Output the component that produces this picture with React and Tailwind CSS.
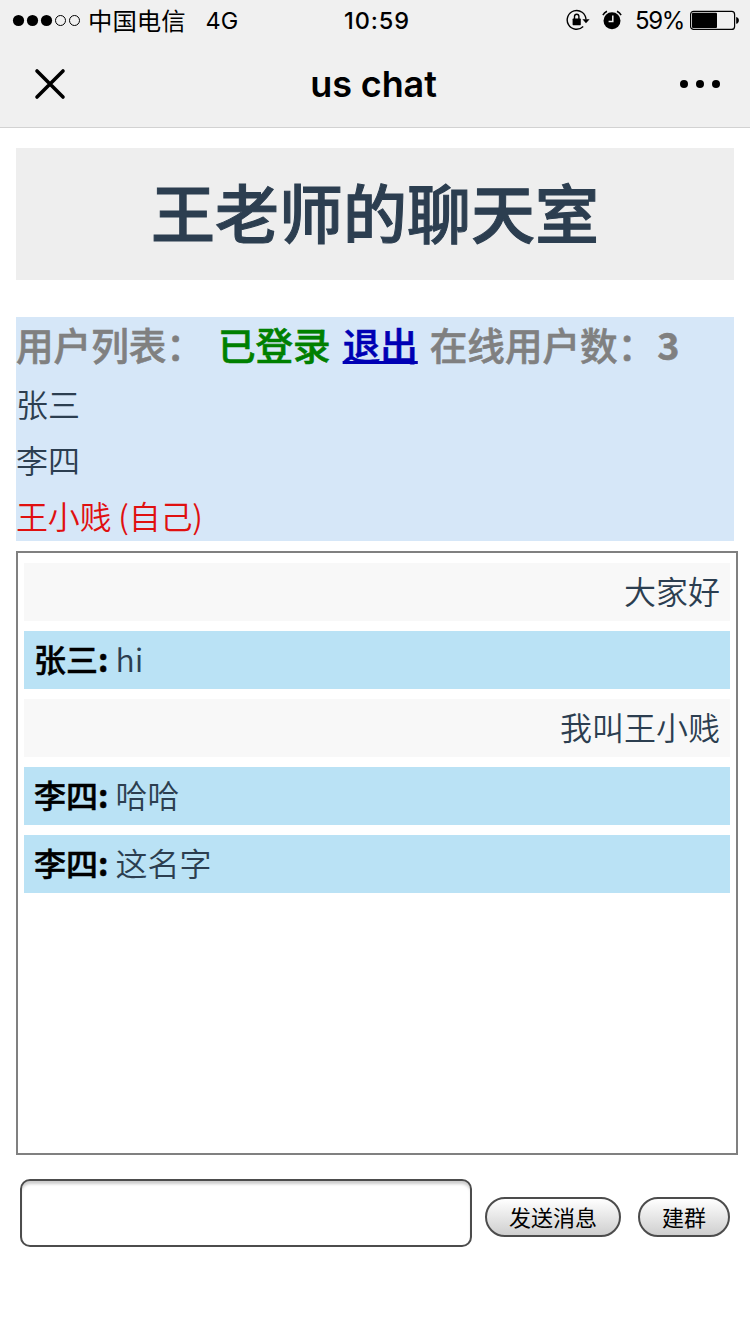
import { useState } from "react";

const users = [
  { id: 1, name: "张三" },
  { id: 2, name: "李四" },
  { id: 3, name: "王小贱", self: true },
];

const messages = [
  { id: 1, self: true, text: "大家好" },
  { id: 2, from: "张三", text: "hi" },
  { id: 3, self: true, text: "我叫王小贱" },
  { id: 4, from: "李四", text: "哈哈" },
  { id: 5, from: "李四", text: "这名字" },
];

function StatusBar() {
  return (
    <div className="h-10 flex items-center text-2xl leading-none">
      <div className="flex-1 flex items-center pl-3">
        <svg width="70" height="14" viewBox="0 0 70 14">
          <circle cx="6.5" cy="7.5" r="5.6" />
          <circle cx="20.5" cy="7.5" r="5.6" />
          <circle cx="34.5" cy="7.5" r="5.6" />
          <circle cx="48.5" cy="7.5" r="5" fill="none" stroke="black" />
          <circle cx="62.5" cy="7.5" r="5" fill="none" stroke="black" />
        </svg>
        <span className="ml-[6px] pt-[2px] text-[24.4px]">中国电信</span>
        <span className="ml-[20px] pt-[2px] text-[23.5px]">4G</span>
      </div>
      <span className="pl-[2px] pt-[2px] font-medium text-[23.5px] tracking-[0.9px]">10:59</span>
      <div className="flex-1 flex items-center justify-end pr-[10px]">
        <svg width="24" height="22" viewBox="0 0 24 22">
          <path d="M20 10.5A9.4 9.4 0 1 0 17.2 17.6" fill="none" stroke="black" strokeWidth="1.4" />
          <path d="M16.4 10.2h7.2L20 14.2z" />
          <rect x="6.6" y="9.6" width="8.2" height="6.6" rx="0.6" />
          <path d="M8.5 10V7.4a2.2 2.2 0 0 1 4.4 0V10" fill="none" stroke="black" strokeWidth="1.4" />
        </svg>
        <svg className="ml-[11px]" width="22" height="22" viewBox="0 0 22 22">
          <circle cx="11" cy="11.8" r="8.5" />
          <path d="M11.8 6.5v6H7.6" fill="none" stroke="#f0f0f0" strokeWidth="1.5" />
          <path d="M1.9 6.2A9 9 0 0 1 6 2.2M20.1 6.2A9 9 0 0 0 16 2.2" fill="none" stroke="black" strokeWidth="1.5" />
        </svg>
        <span className="ml-[12px] pt-[2px] text-[24px] tracking-[-1.3px]">59%</span>
        <svg className="ml-[6px]" width="50" height="20" viewBox="0 0 50 20">
          <rect x="0.6" y="1.4" width="44" height="18" rx="3" fill="none" stroke="black" strokeWidth="1.2" />
          <rect x="2" y="2.8" width="25" height="15.2" rx="1" />
          <path d="M46.2 7c3.6 0.4 3.6 6.4 0 6.8z" />
        </svg>
      </div>
    </div>
  );
}

function NavBar() {
  return (
    <div className="h-[88px] flex items-center border-b border-[#d2d2d2] pl-[34px] pr-[29px]">
      <svg width="32" height="32" viewBox="0 0 32 32" stroke="black" strokeWidth="3.6" strokeLinecap="round">
        <path d="M3 3 29 29M29 3 3 29" />
      </svg>
      <h1 className="flex-1 pl-[2px] text-center text-[36px] leading-none font-semibold tracking-[-0.1px]">us chat</h1>
      <svg width="42" height="10" viewBox="0 0 42 10">
        <circle cx="5" cy="5" r="4" />
        <circle cx="21" cy="5" r="4" />
        <circle cx="37" cy="5" r="4" />
      </svg>
    </div>
  );
}

function UserList() {
  return (
    <div className="mt-[37px] bg-[#d6e7f8]">
      <h3 className="flex h-14 leading-[54px] text-[37.6px] font-medium text-[#808080] [-webkit-text-stroke:0.6px]">
        <span>用户列表：</span>
        <span className="ml-[14px] text-[#008000]">已登录</span>
        <a href="#" className="ml-[12px] text-[#0000b4] underline decoration-[3px] underline-offset-[1px]">退出</a>
        <span className="ml-[12px]">在线用户数：</span>
        <span className="ml-[2px] font-bold">3</span>
      </h3>
      <ul className="font-[350]">
        {users.map((user) => (
          <li key={user.id} className={user.self ? "h-14 leading-[60px] text-[#e01010] tracking-[-0.2px]" : "h-14 leading-[60px]"}>
            {user.name}
            {user.self && " (自己)"}
          </li>
        ))}
      </ul>
    </div>
  );
}

function Message({ message }) {
  if (message.self) {
    return <div className="h-[58px] leading-[54px] px-[10px] bg-[#f8f8f8] text-right">{message.text}</div>;
  }
  return (
    <div className="h-[58px] leading-[54px] px-[10px] bg-[#bae2f5]">
      <span className="font-medium text-black [-webkit-text-stroke:0.5px]">
        {message.from}
        <b>:</b>
      </span>
      <span className="ml-[7px]">{message.text}</span>
    </div>
  );
}

function App() {
  const [text, setText] = useState("");

  const buttonClass =
    "h-10 pb-[3px] rounded-full border-2 border-[#4c4c4c] bg-linear-to-b from-white to-[#cfcfcf] text-[22px] leading-none text-black";

  return (
    <div className="min-h-[1334px] bg-white">
      <header className="bg-[#f0f0f0] text-black font-[Inter,'Noto_Sans_CJK_SC',sans-serif]">
        <StatusBar />
        <NavBar />
      </header>

      <main className="px-4 pt-5 text-[32px] text-[#2c3e50] font-['Noto_Sans_CJK_SC',sans-serif]">
        <h1 className="h-[132px] leading-[124px] bg-[#eee] text-center text-[64px] font-medium [-webkit-text-stroke:1px]">王老师的聊天室</h1>

        <UserList />

        <div className="mt-[10px] w-[722px] h-[604px] border-2 border-[#808080] px-[6px] pt-[10px] flex flex-col gap-[10px] font-[350]">
          {messages.map((message) => (
            <Message key={message.id} message={message} />
          ))}
        </div>

        <form className="mt-6 pl-1 flex items-center" onSubmit={(e) => e.preventDefault()}>
          <input
            type="text"
            value={text}
            onChange={(e) => setText(e.target.value)}
            className="w-[452px] h-[68px] px-3 rounded-[10px] border-2 border-[#4c4c4c] bg-white shadow-[inset_0_4px_3px_-1px_rgba(0,0,0,0.2)]"
          />
          <button type="submit" className={`${buttonClass} mt-2 ml-[13px] w-[136px]`}>
            发送消息
          </button>
          <button type="button" className={`${buttonClass} mt-2 ml-[17px] w-[92px]`}>
            建群
          </button>
        </form>
      </main>
    </div>
  );
}

export default App;
